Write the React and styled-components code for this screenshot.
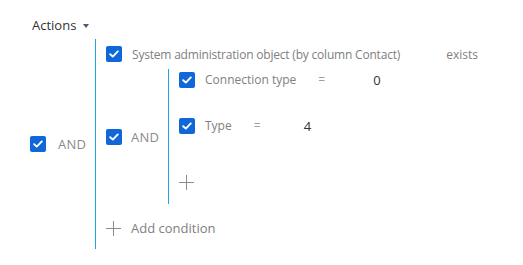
import styled, { createGlobalStyle } from "styled-components"

const GlobalStyle = createGlobalStyle`
  body {
    margin: 0;
    background: #fff;
    font-family: "Open Sans", "Noto Sans", sans-serif;
    font-size: 12px;
    color: #808080;
  }
`

function Check() {
  return (
    <Box>
      <svg width="10" height="8" viewBox="0 0 10 8">
        <path d="M1.2 4.2 L3.8 6.6 L8.8 1.4" fill="none" stroke="#fff" strokeWidth="1.9" strokeLinecap="round" strokeLinejoin="round" />
      </svg>
    </Box>
  )
}

function Plus() {
  return (
    <svg width="15" height="15" viewBox="0 0 15 15">
      <path d="M7.5 0 V15 M0 7.5 H15" stroke="#8c8c8c" strokeWidth="1" />
    </svg>
  )
}

function App() {
  return (
    <Page>
      <GlobalStyle />
      <Header>
        Actions
        <Caret />
      </Header>
      <Group $ml={30}>
        <GroupHead $w={65} $gap={12}>
          <Check />
          <Op>AND</Op>
        </GroupHead>
        <GroupBody>
          <Row $h={30}>
            <Check />
            <Label $mr={36} $ls={-0.2}>System administration object (by column Contact)</Label>
            <Label>exists</Label>
          </Row>
          <Group>
            <GroupHead $w={62} $gap={9}>
              <Check />
              <Op>AND</Op>
            </GroupHead>
            <GroupBody>
              <CondRow>
                <Check />
                <Label $mr={22}>Connection type</Label>
                <Eq $w={55}>=</Eq>
                <Value>0</Value>
              </CondRow>
              <CondRow>
                <Check />
                <Label $mr={22}>Type</Label>
                <Eq $w={50}>=</Eq>
                <Value>4</Value>
              </CondRow>
              <AddRow $pt={14} $h={43}>
                <Plus />
              </AddRow>
            </GroupBody>
          </Group>
          <AddRow $pt={17} $h={45}>
            <Plus />
            <AddText>Add condition</AddText>
          </AddRow>
        </GroupBody>
      </Group>
    </Page>
  )
}

export default App

const Page = styled.div`
  padding-top: 16px;
`

const Header = styled.div`
  margin-left: 32px;
  height: 18px;
  line-height: 18px;
  margin-bottom: 5px;
  font-size: 13px;
  color: #333;
  display: flex;
  align-items: center;
`

const Caret = styled.span`
  margin-left: 7px;
  margin-top: 2px;
  width: 0;
  height: 0;
  border-left: 3.5px solid transparent;
  border-right: 3.5px solid transparent;
  border-top: 4px solid #4b5876;
`

const Group = styled.div`
  display: flex;
  align-items: center;
  margin-left: ${p => p.$ml || 0}px;
`

const GroupHead = styled.div`
  width: ${p => p.$w}px;
  display: flex;
  align-items: center;
  gap: ${p => p.$gap}px;
  flex-shrink: 0;
`

const GroupBody = styled.div`
  border-left: 1px solid #1ea4e4;
  padding-left: 10px;
  display: flex;
  flex-direction: column;
`

const Box = styled.span`
  width: 16px;
  height: 16px;
  border-radius: 2px;
  background: #0f67d9;
  display: flex;
  align-items: center;
  justify-content: center;
  flex-shrink: 0;
`

const Op = styled.span`
  font-size: 13px;
  color: #8a8a8a;
  letter-spacing: 0.2px;
`

const Row = styled.div`
  height: ${p => p.$h}px;
  display: flex;
  align-items: center;
  white-space: nowrap;
`

const CondRow = styled.div`
  height: 46px;
  padding-top: 3px;
  box-sizing: border-box;
  display: flex;
  align-items: flex-start;
  white-space: nowrap;
  line-height: 16px;
`

const Label = styled.span`
  margin-left: 10px;
  margin-right: ${p => p.$mr || 0}px;
  letter-spacing: ${p => p.$ls || 0}px;
  color: #808080;
`

const Eq = styled.span`
  width: ${p => p.$w}px;
  color: #a0a0a0;
`

const Value = styled.span`
  font-size: 13px;
  color: #333;
`

const AddRow = styled.div`
  height: ${p => p.$h}px;
  padding-top: ${p => p.$pt}px;
  box-sizing: border-box;
  display: flex;
  align-items: flex-start;
`

const AddText = styled.span`
  margin-left: 10px;
  font-size: 13px;
  line-height: 15px;
  color: #808080;
`
